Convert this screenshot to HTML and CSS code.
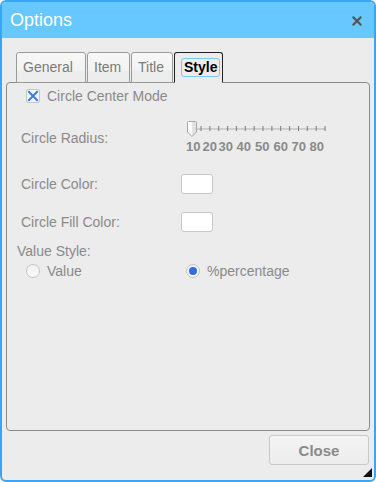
FILE: index.html
```html
<!DOCTYPE html>
<html>
<head>
<meta charset="utf-8">
<link rel="stylesheet" href="styles.css">
</head>
<body>
<div class="dialog">
  <div class="titlebar">
    <span class="title">Options</span>
    <svg class="close-x" width="10" height="10" viewBox="0 0 10 10"><path d="M1.5 1.5 L8.5 8.5 M8.5 1.5 L1.5 8.5" stroke="#555" stroke-width="2.2" stroke-linecap="square"/></svg>
  </div>
  <div class="tabs">
    <div class="tab tab-general">General</div>
    <div class="tab tab-item">Item</div>
    <div class="tab tab-title">Title</div>
    <div class="tab tab-style active"><span class="focus">Style</span></div>
  </div>
  <div class="panel">
    <div class="check-row">
      <span class="checkbox"><svg width="14" height="14" viewBox="0 0 14 14"><path d="M2.8 2.8 L11.2 11.2 M11.2 2.8 L2.8 11.2" stroke="#3a7fe9" stroke-width="2" stroke-linecap="round"/></svg></span>
      <span class="lbl">Circle Center Mode</span>
    </div>
    <div class="slider-row">
      <span class="field-label slider-label">Circle Radius:</span>
      <svg class="slider" width="145" height="34" viewBox="0 0 145 34">
        <rect x="5" y="9" width="134" height="2" fill="#cfcfcf"/>
        <g stroke="#7a7a7a" stroke-width="1">
          <line x1="14" y1="7" x2="14" y2="12"/>
          <line x1="22.9" y1="7" x2="22.9" y2="12"/>
          <line x1="31.7" y1="7" x2="31.7" y2="12"/>
          <line x1="40.6" y1="7" x2="40.6" y2="12"/>
          <line x1="49.4" y1="7" x2="49.4" y2="12"/>
          <line x1="58.3" y1="7" x2="58.3" y2="12"/>
          <line x1="67.2" y1="7" x2="67.2" y2="12"/>
          <line x1="76" y1="7" x2="76" y2="12"/>
          <line x1="84.9" y1="7" x2="84.9" y2="12"/>
          <line x1="93.7" y1="7" x2="93.7" y2="12"/>
          <line x1="102.6" y1="7" x2="102.6" y2="12"/>
          <line x1="111.5" y1="7" x2="111.5" y2="12"/>
          <line x1="120.3" y1="7" x2="120.3" y2="12"/>
          <line x1="129.2" y1="7" x2="129.2" y2="12"/>
          <line x1="138" y1="7" x2="138" y2="12"/>
        </g>
        <defs>
          <linearGradient id="hg" x1="0" x2="1" y1="0" y2="0">
            <stop offset="0" stop-color="#ffffff"/>
            <stop offset="0.5" stop-color="#fbfbfb"/>
            <stop offset="0.55" stop-color="#e4e4e4"/>
            <stop offset="1" stop-color="#e0e0e0"/>
          </linearGradient>
        </defs>
        <path d="M0.5 3.5 Q0.5 2.5 1.5 2.5 L8.5 2.5 Q9.5 2.5 9.5 3.5 L9.5 13 L5 17.5 L0.5 13 Z" fill="url(#hg)" stroke="#a8a8a8" stroke-width="1"/>
        <g class="scale">
          <text x="-1" y="32">10</text>
          <text x="15.5" y="32">20</text>
          <text x="31.5" y="32">30</text>
          <text x="49.5" y="32">40</text>
          <text x="68" y="32">50</text>
          <text x="86.5" y="32">60</text>
          <text x="104.5" y="32">70</text>
          <text x="122.5" y="32">80</text>
        </g>
      </svg>
    </div>
    <div class="color-row first">
      <span class="field-label">Circle Color:</span>
      <span class="swatch"></span>
    </div>
    <div class="color-row second">
      <span class="field-label">Circle Fill Color:</span>
      <span class="swatch"></span>
    </div>
    <div class="section-label">Value Style:</div>
    <div class="radio-row">
      <div class="radio-opt first-opt">
        <span class="radio"></span>
        <span class="lbl">Value</span>
      </div>
      <div class="radio-opt">
        <span class="radio checked"><span class="dot"></span></span>
        <span class="lbl">%percentage</span>
      </div>
    </div>
  </div>
  <div class="footer">
    <button class="btn">Close</button>
  </div>
  <svg class="grip" width="9" height="9" viewBox="0 0 9 9"><polygon points="9,0 9,9 0,9" fill="#111"/></svg>
</div>
</body>
</html>
```
FILE: styles.css
```css
html, body {
  margin: 0;
  padding: 0;
  background: #ffffff;
}
.dialog {
  position: relative;
  width: 376px;
  height: 482px;
  box-sizing: border-box;
  border: 2px solid #3aa5f7;
  border-radius: 6px;
  background: #ececec;
  display: flex;
  flex-direction: column;
  font-family: "Liberation Sans", Arial, sans-serif;
  overflow: hidden;
}
.titlebar {
  height: 36px;
  flex: none;
  background: #66c8ff;
  display: flex;
  align-items: center;
  justify-content: space-between;
  padding: 0 12px 0 8px;
}
.title {
  color: #ffffff;
  font-size: 18px;
  line-height: 20px;
}
.close-x {
  display: block;
  margin-top: 1px;
}
.tabs {
  display: flex;
  gap: 1px;
  margin-top: 14px;
  padding-left: 14px;
  height: 31px;
  margin-bottom: -1px;
  position: relative;
  z-index: 2;
  flex: none;
}
.tab {
  box-sizing: border-box;
  height: 31px;
  border: 1px solid #9a9a9a;
  border-radius: 3px 3px 0 0;
  background: linear-gradient(#f8f8f8 0%, #f2f2f2 60%, #ededed 62%, #ececec 100%);
  color: #7a7a7a;
  font-size: 14px;
  display: flex;
  align-items: center;
  justify-content: flex-start;
  padding: 0 0 1px 6px;
}
.tab-general { width: 70px; }
.tab-item { width: 43px; }
.tab-title { width: 42px; }
.tab-style { width: 49px; }
.tab.active {
  background: #ececec;
  border-color: #222222;
  border-bottom: 1px solid #ececec;
  color: #000000;
  font-weight: bold;
  padding-left: 6px;
}
.focus {
  border: 1px solid #7cc6f7;
  border-radius: 3px;
  padding: 1px 2px 1px 2px;
  line-height: 15px;
}
.panel {
  flex: none;
  height: 349px;
  box-sizing: border-box;
  margin: 0 4px;
  border: 1px solid #8a8a8a;
  border-radius: 4px;
  position: relative;
  z-index: 1;
}
.lbl, .field-label, .section-label {
  color: #8a8a8a;
  font-size: 14px;
  line-height: 16px;
}
.check-row {
  display: flex;
  align-items: center;
  height: 14px;
  margin-top: 6px;
  padding-left: 19px;
}
.checkbox {
  width: 14px;
  height: 14px;
  box-sizing: border-box;
  border: 1px solid #c6c6c6;
  border-radius: 2px;
  background: #f4f4f4;
  position: relative;
}
.checkbox svg {
  position: absolute;
  left: -1px;
  top: -1px;
}
.check-row .lbl {
  margin-left: 7px;
}
.slider-row {
  display: flex;
  align-items: center;
  height: 34px;
  margin-top: 16px;
  padding-left: 14px;
}
.field-label {
  width: 160px;
  flex: none;
}
.slider-label {
  width: 166px;
  padding-top: 3px;
}
.slider {
  display: block;
  overflow: visible;
}
.scale text {
  font-family: "Liberation Sans", Arial, sans-serif;
  font-size: 13px;
  font-weight: bold;
  fill: #8a8a8a;
}
.color-row {
  display: flex;
  align-items: center;
  height: 20px;
  padding-left: 14px;
}
.color-row.first { margin-top: 21px; }
.color-row.second { margin-top: 18px; }
.swatch {
  width: 32px;
  height: 20px;
  box-sizing: border-box;
  border: 1px solid #c8c8c8;
  border-radius: 3px;
  background: #ffffff;
}
.section-label {
  margin-top: 11px;
  padding-left: 10px;
}
.radio-row {
  display: flex;
  margin-top: 4px;
  padding-left: 19px;
  height: 16px;
  align-items: center;
}
.radio-opt {
  display: flex;
  align-items: center;
}
.first-opt {
  width: 160px;
}
.radio {
  width: 14px;
  height: 14px;
  box-sizing: border-box;
  border: 1px solid #c4c4c4;
  border-radius: 50%;
  background: linear-gradient(#f2f2f2, #fafafa);
  display: flex;
  align-items: center;
  justify-content: center;
}
.dot {
  width: 8px;
  height: 8px;
  border-radius: 50%;
  background: #2f6fe3;
}
.radio-opt .lbl {
  margin-left: 7px;
}
.footer {
  display: flex;
  justify-content: flex-end;
  margin-top: 4px;
  padding-right: 5px;
}
.btn {
  width: 100px;
  height: 30px;
  box-sizing: border-box;
  border: 1px solid #c8c8c8;
  border-radius: 3px;
  background: linear-gradient(#f4f4f4, #ececec);
  color: #8a8a8a;
  font-family: "Liberation Sans", Arial, sans-serif;
  font-size: 15px;
  font-weight: bold;
  padding: 0;
}
.grip {
  position: absolute;
  right: 2px;
  bottom: 3px;
  display: block;
}
```
